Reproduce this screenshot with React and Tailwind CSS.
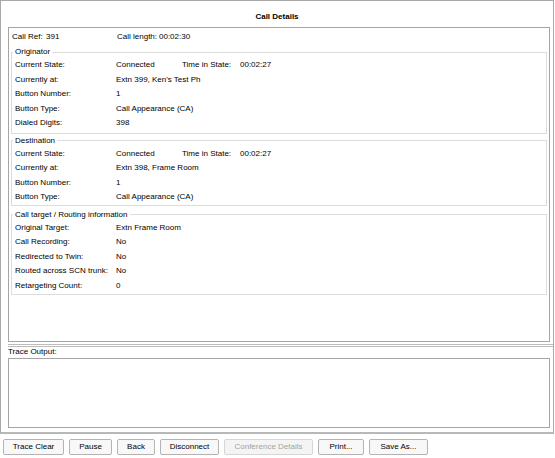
const originator = [
  ['Current State:', 'Connected', ['Time in State:', '00:02:27']],
  ['Currently at:', "Extn 399, Ken's Test Ph"],
  ['Button Number:', '1'],
  ['Button Type:', 'Call Appearance (CA)'],
  ['Dialed Digits:', '398'],
];

const destination = [
  ['Current State:', 'Connected', ['Time in State:', '00:02:27']],
  ['Currently at:', 'Extn 398, Frame Room'],
  ['Button Number:', '1'],
  ['Button Type:', 'Call Appearance (CA)'],
];

const routing = [
  ['Original Target:', 'Extn Frame Room'],
  ['Call Recording:', 'No'],
  ['Redirected to Twin:', 'No'],
  ['Routed across SCN trunk:', 'No'],
  ['Retargeting Count:', '0'],
];

const buttons = [
  { label: 'Trace Clear', w: 'w-[61px]' },
  { label: 'Pause', w: 'w-[43px]' },
  { label: 'Back', w: 'w-[38px]' },
  { label: 'Disconnect', w: 'w-[59px]' },
  { label: 'Conference Details', w: 'w-[89px]', disabled: true },
  { label: 'Print...', w: 'w-[46px]' },
  { label: 'Save As...', w: 'w-[59px]' },
];

const Row = ({ label, value, extra }) => (
  <div className="flex h-[14.5px] items-center pl-[3px] whitespace-nowrap">
    <span className="w-[101px]">{label}</span>
    <span className="w-[66px]">{value}</span>
    {extra && (
      <>
        <span className="w-[58px]">{extra[0]}</span>
        <span>{extra[1]}</span>
      </>
    )}
  </div>
);

const Group = ({ title, rows, className }) => (
  <fieldset className={`mx-[2px] border border-[#dcdcdc] ${className}`}>
    <legend className="ml-[1px] px-[2px] leading-[12px]">{title}</legend>
    {rows.map(([label, value, extra]) => (
      <Row key={label} label={label} value={value} extra={extra} />
    ))}
  </fieldset>
);

const App = () => {
  return (
    <div className="w-[555px] h-[458px] bg-white text-[8px] text-black font-['Liberation_Sans',Arial,sans-serif] overflow-hidden">
      <div className="w-[554px] h-[434px] border-t border-l border-r border-b-2 border-t-[#a8a8a8] border-x-[#a8a8a8] border-b-[#b8b8b8]">
        <div className="h-[26px] pt-[10px] text-center font-bold leading-[12px]">Call Details</div>

        <div className="ml-[7px] w-[542px] h-[315px] border border-[#a5a5a5]">
          <div className="flex h-[18px] items-center pl-[3px] whitespace-nowrap">
            <span className="w-[34px]">Call Ref:</span>
            <span className="w-[71px]">391</span>
            <span className="w-[42px]">Call length:</span>
            <span>00:02:30</span>
          </div>
          <Group title="Originator" rows={originator} className="pb-[2px]" />
          <Group title="Destination" rows={destination} className="mt-[1px]" />
          <Group title="Call target / Routing information" rows={routing} className="mt-[3px] pb-[1px]" />
        </div>

        <div className="ml-[7px] mt-[2px] h-[3px] border-y border-[#bcbcbc]"></div>
        <div className="ml-[7px] h-[10px] leading-[10px]">Trace Output:</div>
        <div className="ml-[7px] mt-[1px] w-[542px] h-[70px] border border-[#a5a5a5]"></div>
      </div>

      <div className="flex gap-[5px] ml-[3px] mt-[5px]">
        {buttons.map((b) => (
          <button
            key={b.label}
            disabled={b.disabled}
            className={`${b.w} h-[16px] rounded-[2px] border text-center leading-[14px] ${
              b.disabled
                ? 'border-[#d6d6d6] bg-[#f4f4f4] text-[#a3a3a3]'
                : 'border-[#b3b3b3] bg-[#f8f8f8] text-black'
            }`}
          >
            {b.label}
          </button>
        ))}
      </div>
    </div>
  );
};

export default App;
